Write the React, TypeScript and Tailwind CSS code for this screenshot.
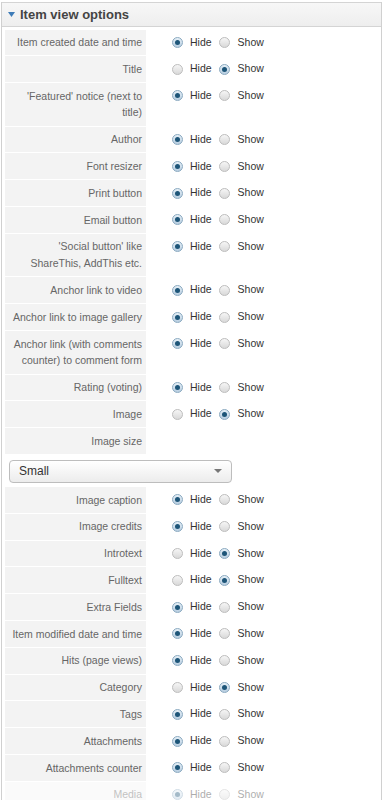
import React from "react";

type Row = { label: string; value?: "hide" | "show" | null; faded?: boolean };

const rowsA: Row[] = [
  { label: "Item created date and time", value: "hide" },
  { label: "Title", value: "show" },
  { label: "'Featured' notice (next to title)", value: "hide" },
  { label: "Author", value: "hide" },
  { label: "Font resizer", value: "hide" },
  { label: "Print button", value: "hide" },
  { label: "Email button", value: "hide" },
  { label: "'Social button' like ShareThis, AddThis etc.", value: "hide" },
  { label: "Anchor link to video", value: "hide" },
  { label: "Anchor link to image gallery", value: "hide" },
  { label: "Anchor link (with comments counter) to comment form", value: "hide" },
  { label: "Rating (voting)", value: "hide" },
  { label: "Image", value: "show" },
  { label: "Image size", value: null },
];

const rowsB: Row[] = [
  { label: "Image caption", value: "hide" },
  { label: "Image credits", value: "hide" },
  { label: "Introtext", value: "show" },
  { label: "Fulltext", value: "show" },
  { label: "Extra Fields", value: "hide" },
  { label: "Item modified date and time", value: "hide" },
  { label: "Hits (page views)", value: "hide" },
  { label: "Category", value: "show" },
  { label: "Tags", value: "hide" },
  { label: "Attachments", value: "hide" },
  { label: "Attachments counter", value: "hide" },
  { label: "Media", value: "hide", faded: true },
];

function Radio({ checked }: { checked: boolean }) {
  return checked ? (
    <span className="flex h-[11px] w-[11px] shrink-0 items-center justify-center rounded-full border border-[#8aa9c0] bg-gradient-to-b from-[#e6f0f7] to-[#b7cde0]">
      <span className="h-[5px] w-[5px] rounded-full bg-[#1d5578]" />
    </span>
  ) : (
    <span className="h-[11px] w-[11px] shrink-0 rounded-full border border-[#bdbdbd] bg-gradient-to-b from-[#f6f6f6] to-[#d9d9d9]" />
  );
}

function OptionRow({ row }: { row: Row }) {
  return (
    <div className={`flex border-b-[1px] border-white ${row.faded ? "opacity-40" : ""}`}>
      <div className="w-[141px] shrink-0 bg-[#f3f3f3] py-[4.5px] pr-[4px] pl-[6px] text-right text-[10.5px] leading-[16.8px] text-[#666]">
        {row.label}
      </div>
      {row.value ? (
        <div className="flex h-[25.8px] items-center pl-[25.5px] text-[10.5px] text-[#333]">
          <Radio checked={row.value === "hide"} />
          <span className="ml-[7.5px] mr-[7.5px]">Hide</span>
          <Radio checked={row.value === "show"} />
          <span className="ml-[7.5px]">Show</span>
        </div>
      ) : null}
    </div>
  );
}

export default function App() {
  return (
    <div className="h-[800px] w-[385px] overflow-hidden bg-white pt-[2px] font-['Liberation_Sans',Arial,sans-serif]">
      <div className="ml-[1px] w-[381px] border-x border-[#d0d0d0]">
        <div className="flex h-[25px] items-center border-y border-[#d4d4d4] bg-gradient-to-b from-[#f7f7f7] to-[#eeeeee] pl-[6px]">
          <svg width="7" height="5" viewBox="0 0 7 5" className="mr-[5px]">
            <polygon points="0,0 7,0 3.5,5" fill="#3e7cb8" />
          </svg>
          <span className="text-[13px] font-bold text-[#444]">Item view options</span>
        </div>
        <div className="px-[3px] pt-[2.5px]">
          {rowsA.map((r) => (
            <OptionRow key={r.label} row={r} />
          ))}
          <div className="flex h-[32px] items-center bg-white pl-[4px]">
            <div className="flex h-[23px] w-[223px] items-center justify-between rounded-[4px] border border-[#bdbdbd] bg-gradient-to-b from-[#ffffff] to-[#ececec] pl-[9px] pr-[9px] shadow-[inset_0_1px_0_#fff]">
              <span className="text-[12px] text-[#333]">Small</span>
              <svg width="8" height="4" viewBox="0 0 8 4">
                <polygon points="0,0 8,0 4,4" fill="#777" />
              </svg>
            </div>
          </div>
          {rowsB.map((r) => (
            <OptionRow key={r.label} row={r} />
          ))}
        </div>
      </div>
    </div>
  );
}
